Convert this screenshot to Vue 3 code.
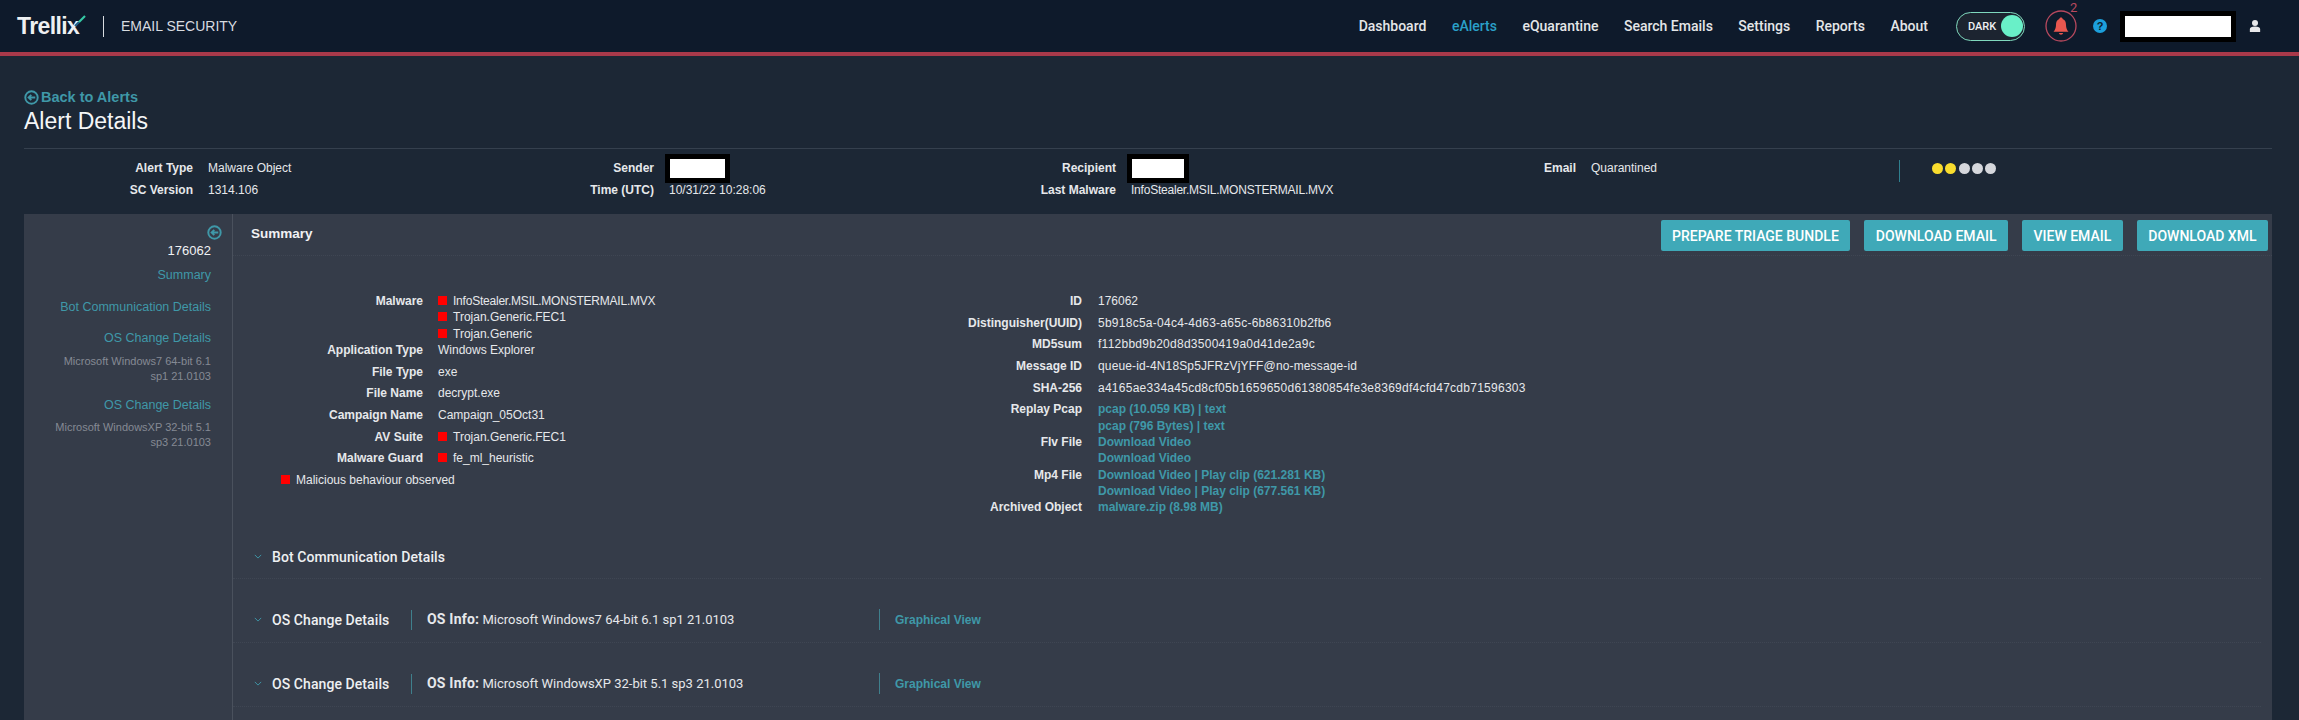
<template>
  <div class="page">
    <header class="topbar">
      <div class="brand">
        <span class="logo">Trellix<svg class="logo-tick" viewBox="0 0 12 12"><path d="M1 11 L5 7" stroke="#1d5f8a" stroke-width="2.200" fill="none" /><path d="M5 7 L11 1" stroke="#35c9a5" stroke-width="2.200" fill="none" /></svg></span>
        <span class="brand-sep"></span>
        <span class="product">EMAIL SECURITY</span>
      </div>
      <nav class="nav">
        <a v-for="item in navItems" :key="item" :class="['nav-link', { active: item === 'eAlerts' }]">{{ item }}</a>
      </nav>
      <div class="toggle"><span>DARK</span><i class="knob"></i></div>
      <div class="bell">
        <svg viewBox="0 0 32 32" width="32" height="32">
          <circle cx="16" cy="16" r="15" fill="none" stroke="#b8495e" stroke-width="1.300" />
          <path d="M16 7.500c-1 0-1.600.7-1.700 1.600C11.800 10 11 12.300 11 15c0 3-1 5-2.500 6.800h15C22 20 21 18 21 15c0-2.700-.8-5-3.300-5.900-.1-.9-.7-1.600-1.700-1.600zM13.800 23a2.300 2.300 0 0 0 4.400 0z" fill="#e9574f" />
        </svg>
        <span class="bell-count">2</span>
      </div>
      <span class="help">?</span>
      <div class="redacted user-box"></div>
      <svg class="user-icon" viewBox="0 0 14 16" width="12" height="14">
        <circle cx="7" cy="4.500" r="3.500" fill="#e8e8ea" />
        <path d="M1 15v-3.500C1 9.500 3 8.500 7 8.500s6 1 6 3V15z" fill="#e8e8ea" />
      </svg>
    </header>

    <main class="content">
      <a class="back-link"><svg class="circle-back" viewBox="0 0 14 14"><circle cx="7" cy="7" r="5.800" /><path d="M10.500 7H4.500M6.800 4.500 4.300 7l2.500 2.500" /></svg>Back to Alerts</a>
      <h1 class="title">Alert Details</h1>

      <section class="overview">
        <div class="ov-cell ov-a">
          <div class="ov-row"><b>Alert Type</b><span>Malware Object</span></div>
          <div class="ov-row"><b>SC Version</b><span>1314.106</span></div>
        </div>
        <div class="ov-cell ov-b">
          <div class="ov-row"><b>Sender</b><div class="redacted small-box sender"></div></div>
          <div class="ov-row"><b>Time (UTC)</b><span>10/31/22 10:28:06</span></div>
        </div>
        <div class="ov-cell ov-c">
          <div class="ov-row"><b>Recipient</b><div class="redacted small-box"></div></div>
          <div class="ov-row"><b>Last Malware</b><span class="tight">InfoStealer.MSIL.MONSTERMAIL.MVX</span></div>
        </div>
        <div class="ov-cell ov-d">
          <div class="ov-row"><b>Email</b><span>Quarantined</span></div>
        </div>
        <div class="severity">
          <i v-for="(dot, i) in severity" :key="i" :class="['dot', dot]"></i>
        </div>
      </section>

      <section class="panel">
        <aside class="sidebar">
          <svg class="circle-back side-icon" viewBox="0 0 14 14"><circle cx="7" cy="7" r="5.800" /><path d="M10.500 7H4.500M6.800 4.500 4.300 7l2.500 2.500" /></svg>
          <div class="side-id">176062</div>
          <a class="side-link">Summary</a>
          <a class="side-link">Bot Communication Details</a>
          <a class="side-link">OS Change Details</a>
          <p class="side-note">Microsoft Windows7 64-bit 6.1 sp1 21.0103</p>
          <a class="side-link">OS Change Details</a>
          <p class="side-note">Microsoft WindowsXP 32-bit 5.1 sp3 21.0103</p>
        </aside>

        <div class="main">
          <div class="summary-head">
            <h2>Summary</h2>
            <div class="actions">
              <button v-for="b in buttons" :key="b" class="action">{{ b }}</button>
            </div>
          </div>

          <div class="details">
            <div class="detail-col left-col">
              <div v-for="row in leftRows" :key="row.label" :class="['detail-row', { multi: row.lines.length > 1 }]">
                <b>{{ row.label }}</b>
                <div>
                  <div v-for="line in row.lines" :key="line" :class="['line', { tight: line.startsWith('InfoStealer') }]"><i v-if="row.flag" class="flag"></i>{{ line }}</div>
                </div>
              </div>
              <div class="observed"><i class="flag"></i>Malicious behaviour observed</div>
            </div>
            <div class="detail-col right-col">
              <div v-for="row in rightRows" :key="row.label" :class="['detail-row', { multi: row.kind === 'link' }]">
                <b>{{ row.label }}</b>
                <div>
                  <div v-for="(line, i) in row.lines" :key="i" :class="['line', row.kind]">{{ line }}</div>
                </div>
              </div>
            </div>
          </div>

          <div class="fold first">
            <svg class="chev" viewBox="0 0 10 6"><path d="M1 1l4 4 4-4" /></svg>
            <span class="fold-title">Bot Communication Details</span>
          </div>
          <div v-for="os in osRows" :key="os" class="fold">
            <svg class="chev" viewBox="0 0 10 6"><path d="M1 1l4 4 4-4" /></svg>
            <span class="fold-title os-title">OS Change Details</span>
            <span class="os-info"><b>OS Info:</b> {{ os }}</span>
            <a class="graph-link">Graphical View</a>
          </div>
        </div>
      </section>
    </main>
  </div>
</template>

<script setup>
const navItems = ["Dashboard", "eAlerts", "eQuarantine", "Search Emails", "Settings", "Reports", "About"];
const severity = ["on", "on", "off", "off", "off"];
const buttons = ["PREPARE TRIAGE BUNDLE", "DOWNLOAD EMAIL", "VIEW EMAIL", "DOWNLOAD XML"];

const leftRows = [
  { label: "Malware", flag: true, lines: ["InfoStealer.MSIL.MONSTERMAIL.MVX", "Trojan.Generic.FEC1", "Trojan.Generic"] },
  { label: "Application Type", lines: ["Windows Explorer"] },
  { label: "File Type", lines: ["exe"] },
  { label: "File Name", lines: ["decrypt.exe"] },
  { label: "Campaign Name", lines: ["Campaign_05Oct31"] },
  { label: "AV Suite", flag: true, lines: ["Trojan.Generic.FEC1"] },
  { label: "Malware Guard", flag: true, lines: ["fe_ml_heuristic"] },
];

const rightRows = [
  { label: "ID", lines: ["176062"] },
  { label: "Distinguisher(UUID)", kind: "hash", lines: ["5b918c5a-04c4-4d63-a65c-6b86310b2fb6"] },
  { label: "MD5sum", kind: "hash", lines: ["f112bbd9b20d8d3500419a0d41de2a9c"] },
  { label: "Message ID", kind: "soft", lines: ["queue-id-4N18Sp5JFRzVjYFF@no-message-id"] },
  { label: "SHA-256", kind: "hash", lines: ["a4165ae334a45cd8cf05b1659650d61380854fe3e8369df4cfd47cdb71596303"] },
  { label: "Replay Pcap", kind: "link", lines: ["pcap (10.059 KB) | text", "pcap (796 Bytes) | text"] },
  { label: "Flv File", kind: "link", lines: ["Download Video", "Download Video"] },
  { label: "Mp4 File", kind: "link", lines: ["Download Video | Play clip (621.281 KB)", "Download Video | Play clip (677.561 KB)"] },
  { label: "Archived Object", kind: "link", lines: ["malware.zip (8.98 MB)"] },
];

const osRows = ["Microsoft Windows7 64-bit 6.1 sp1 21.0103", "Microsoft WindowsXP 32-bit 5.1 sp3 21.0103"];
</script>

<style>
html,
body {
  margin: 0;
  background: #1c2735;
  overflow: hidden;
}
</style>

<style scoped>
.page {
  height: 720px;
  display: flex;
  flex-direction: column;
  font-family: "Liberation Sans", Arial, sans-serif;
  font-size: 12px;
  color: #e6e8eb;
  background: #1c2735;
}

.topbar {
  height: 52px;
  flex: none;
  display: flex;
  align-items: center;
  padding: 0 38px 0 17px;
  background: #0e1a2b;
  border-bottom: 4px solid #a9394a;
}
.brand {
  display: flex;
  align-items: center;
  flex: 1;
}
.logo {
  position: relative;
  font-size: 23px;
  font-weight: 700;
  letter-spacing: -0.6px;
  color: #eef0f2;
  width: 69px;
}
.logo-tick {
  position: absolute;
  right: 0;
  top: 2px;
  width: 12px;
  height: 12px;
}
.brand-sep {
  width: 1px;
  height: 21px;
  background: #d8dce0;
  margin: 0 17px;
}
.product {
  font-size: 14px;
  color: #d8dce0;
}
.nav {
  display: flex;
  gap: 25.500px;
  margin-right: 28px;
}
.nav-link {
  font-family: Roboto, sans-serif;
  font-size: 14px;
  font-weight: 500;
  color: #e4e6e8;
}
.nav-link.active {
  color: #2aa0c8;
}
.toggle {
  width: 69px;
  height: 29px;
  box-sizing: border-box;
  display: flex;
  align-items: center;
  justify-content: space-between;
  padding: 0 1.500px 0 11px;
  border: 1px solid #7fd8bd;
  border-radius: 15px;
  background: #1c2430;
  font-family: Roboto, sans-serif;
  font-size: 11px;
  font-weight: 500;
  color: #eef0f2;
}
.knob {
  width: 22px;
  height: 22px;
  border-radius: 50%;
  background: #69f0c8;
}
.bell {
  position: relative;
  width: 32px;
  height: 32px;
  margin-left: 20px;
}
.bell svg {
  display: block;
}
.bell-count {
  position: absolute;
  left: 25px;
  top: -10px;
  font-family: Roboto, sans-serif;
  font-size: 13px;
  color: #b8495e;
}
.help {
  width: 14px;
  height: 14px;
  margin: 0 13px 0 16px;
  border-radius: 50%;
  background: #1c9fdc;
  color: #0e1a2b;
  font-size: 11px;
  font-weight: 700;
  line-height: 14px;
  text-align: center;
}
.redacted {
  background: #fff;
  border: 5px solid #000;
  box-sizing: border-box;
}
.user-box {
  width: 116px;
  height: 31px;
  margin-right: 13px;
}
.user-icon {
  flex: none;
}

.content {
  flex: 1;
  min-height: 0;
  display: flex;
  flex-direction: column;
  padding: 32px 27px 0 24px;
}
.back-link {
  display: flex;
  align-items: center;
  gap: 2px;
  font-size: 14.500px;
  font-weight: 700;
  line-height: 18px;
  color: #3f98a8;
}
.circle-back {
  width: 15px;
  height: 15px;
  flex: none;
  fill: none;
  stroke: #3f98a8;
  stroke-width: 1.800;
}
.title {
  margin: 1px 0 0;
  font-size: 23px;
  font-weight: 400;
  line-height: 28px;
  color: #f5f6f7;
}

.overview {
  height: 66px;
  flex: none;
  margin-top: 13px;
  display: grid;
  grid-template-columns: 341px 462px 481px 591px 1fr;
  border-top: 1px solid #35404e;
  box-sizing: border-box;
}
.ov-cell {
  padding-top: 8px;
}
.ov-row {
  display: flex;
  align-items: center;
  gap: 15px;
  height: 22px;
  white-space: nowrap;
}
.ov-row b {
  flex: none;
  text-align: right;
  color: #e6e8eb;
}
.ov-a .ov-row b {
  width: 169px;
}
.ov-b .ov-row b,
.ov-c .ov-row b {
  width: 289px;
}
.ov-d .ov-row b {
  width: 268px;
}
.small-box {
  flex: none;
  width: 62px;
  height: 29px;
  margin-left: -4px;
}
.sender {
  width: 65px;
}
.tight {
  letter-spacing: -0.220px;
}
.severity {
  align-self: start;
  margin-top: 11px;
  height: 22px;
  box-sizing: border-box;
  padding: 2.500px 0 0 32px;
  display: flex;
  align-items: flex-start;
  gap: 2.300px;
  border-left: 1px solid #2f7f8f;
}
.dot {
  width: 11px;
  height: 11px;
  border-radius: 50%;
  background: #d5d7dc;
}
.dot.on {
  background: #f9dd2e;
}

.panel {
  flex: 1;
  min-height: 0;
  display: flex;
  background: #353c49;
}
.sidebar {
  width: 209px;
  flex: none;
  box-sizing: border-box;
  display: flex;
  flex-direction: column;
  align-items: flex-end;
  padding: 11px 21px 0 0;
  border-right: 1px solid #4a515d;
  text-align: right;
}
.side-icon {
  margin-right: -11px;
}
.side-id {
  margin-top: 3px;
  font-size: 13px;
  line-height: 16px;
  color: #f0f1f3;
}
.side-link {
  margin-top: 9px;
  margin-bottom: 8.500px;
  font-size: 12.500px;
  line-height: 14px;
  white-space: nowrap;
  color: #3f98a8;
}
.side-note {
  margin: 0 0 5px;
  width: 160px;
  font-size: 11px;
  line-height: 15px;
  color: #858a94;
}

.main {
  flex: 1;
  min-width: 0;
}
.summary-head {
  display: flex;
  justify-content: space-between;
  height: 35px;
  padding: 6px 4px 0 18px;
  border-bottom: 1px dotted #3f4653;
}
.summary-head h2 {
  margin: 6px 0 0;
  font-size: 13.500px;
  line-height: 16px;
  color: #f0f1f3;
}
.actions {
  display: flex;
  gap: 14px;
  height: 31px;
}
.action {
  height: 31px;
  padding: 0 11.500px;
  border: none;
  border-radius: 2px;
  background: #3fa9b8;
  font-family: Roboto, sans-serif;
  font-size: 14px;
  font-weight: 500;
  color: #fff;
  white-space: nowrap;
}

.details {
  display: flex;
  height: 279px;
  padding-top: 37px;
  box-sizing: border-box;
}
.detail-col {
  flex: none;
}
.left-col {
  width: 649px;
}
.detail-row {
  display: grid;
  padding-bottom: 5.400px;
  line-height: 16.300px;
}
.detail-row.multi {
  padding-bottom: 0;
}
.left-col .detail-row {
  grid-template-columns: 190px 1fr;
  column-gap: 15px;
}
.right-col .detail-row {
  grid-template-columns: 200px 1fr;
  column-gap: 16px;
}
.detail-row b {
  text-align: right;
  color: #e6e8eb;
}
.line {
  color: #e6e8eb;
  white-space: nowrap;
}
.line.hash {
  letter-spacing: 0.260px;
}
.line.soft {
  letter-spacing: 0.140px;
}
.line.link {
  color: #3f98a8;
  font-weight: 700;
}
.flag {
  display: inline-block;
  width: 9px;
  height: 9px;
  margin-right: 6px;
  background: #f00;
}
.observed {
  margin-left: 48px;
  line-height: 16.300px;
}

.fold {
  display: flex;
  align-items: center;
  height: 64px;
  margin-right: 11px;
  padding: 18px 0 0 21px;
  box-sizing: border-box;
  border-bottom: 1px dotted #3f4653;
}
.fold.first {
  height: 44px;
  padding-top: 0;
}
.chev {
  width: 8px;
  height: 5px;
  margin-right: 10px;
  fill: none;
  stroke: #3f98a8;
  stroke-width: 1.200;
}
.fold-title {
  font-family: Roboto, sans-serif;
  font-size: 14px;
  font-weight: 500;
  letter-spacing: 0.080px;
  color: #eef0f2;
}
.os-title {
  width: 139px;
  border-right: 1px solid #3f7f8c;
  line-height: 20px;
}
.os-info {
  width: 468px;
  box-sizing: border-box;
  padding-left: 15px;
  border-right: 1px solid #3f7f8c;
  font-family: Roboto, sans-serif;
  font-size: 13px;
  line-height: 20px;
  color: #e6e8eb;
}
.os-info b {
  font-size: 14px;
  font-weight: 700;
  letter-spacing: 0.200px;
}
.graph-link {
  margin-left: 15px;
  font-weight: 700;
  color: #3f98a8;
}
</style>
